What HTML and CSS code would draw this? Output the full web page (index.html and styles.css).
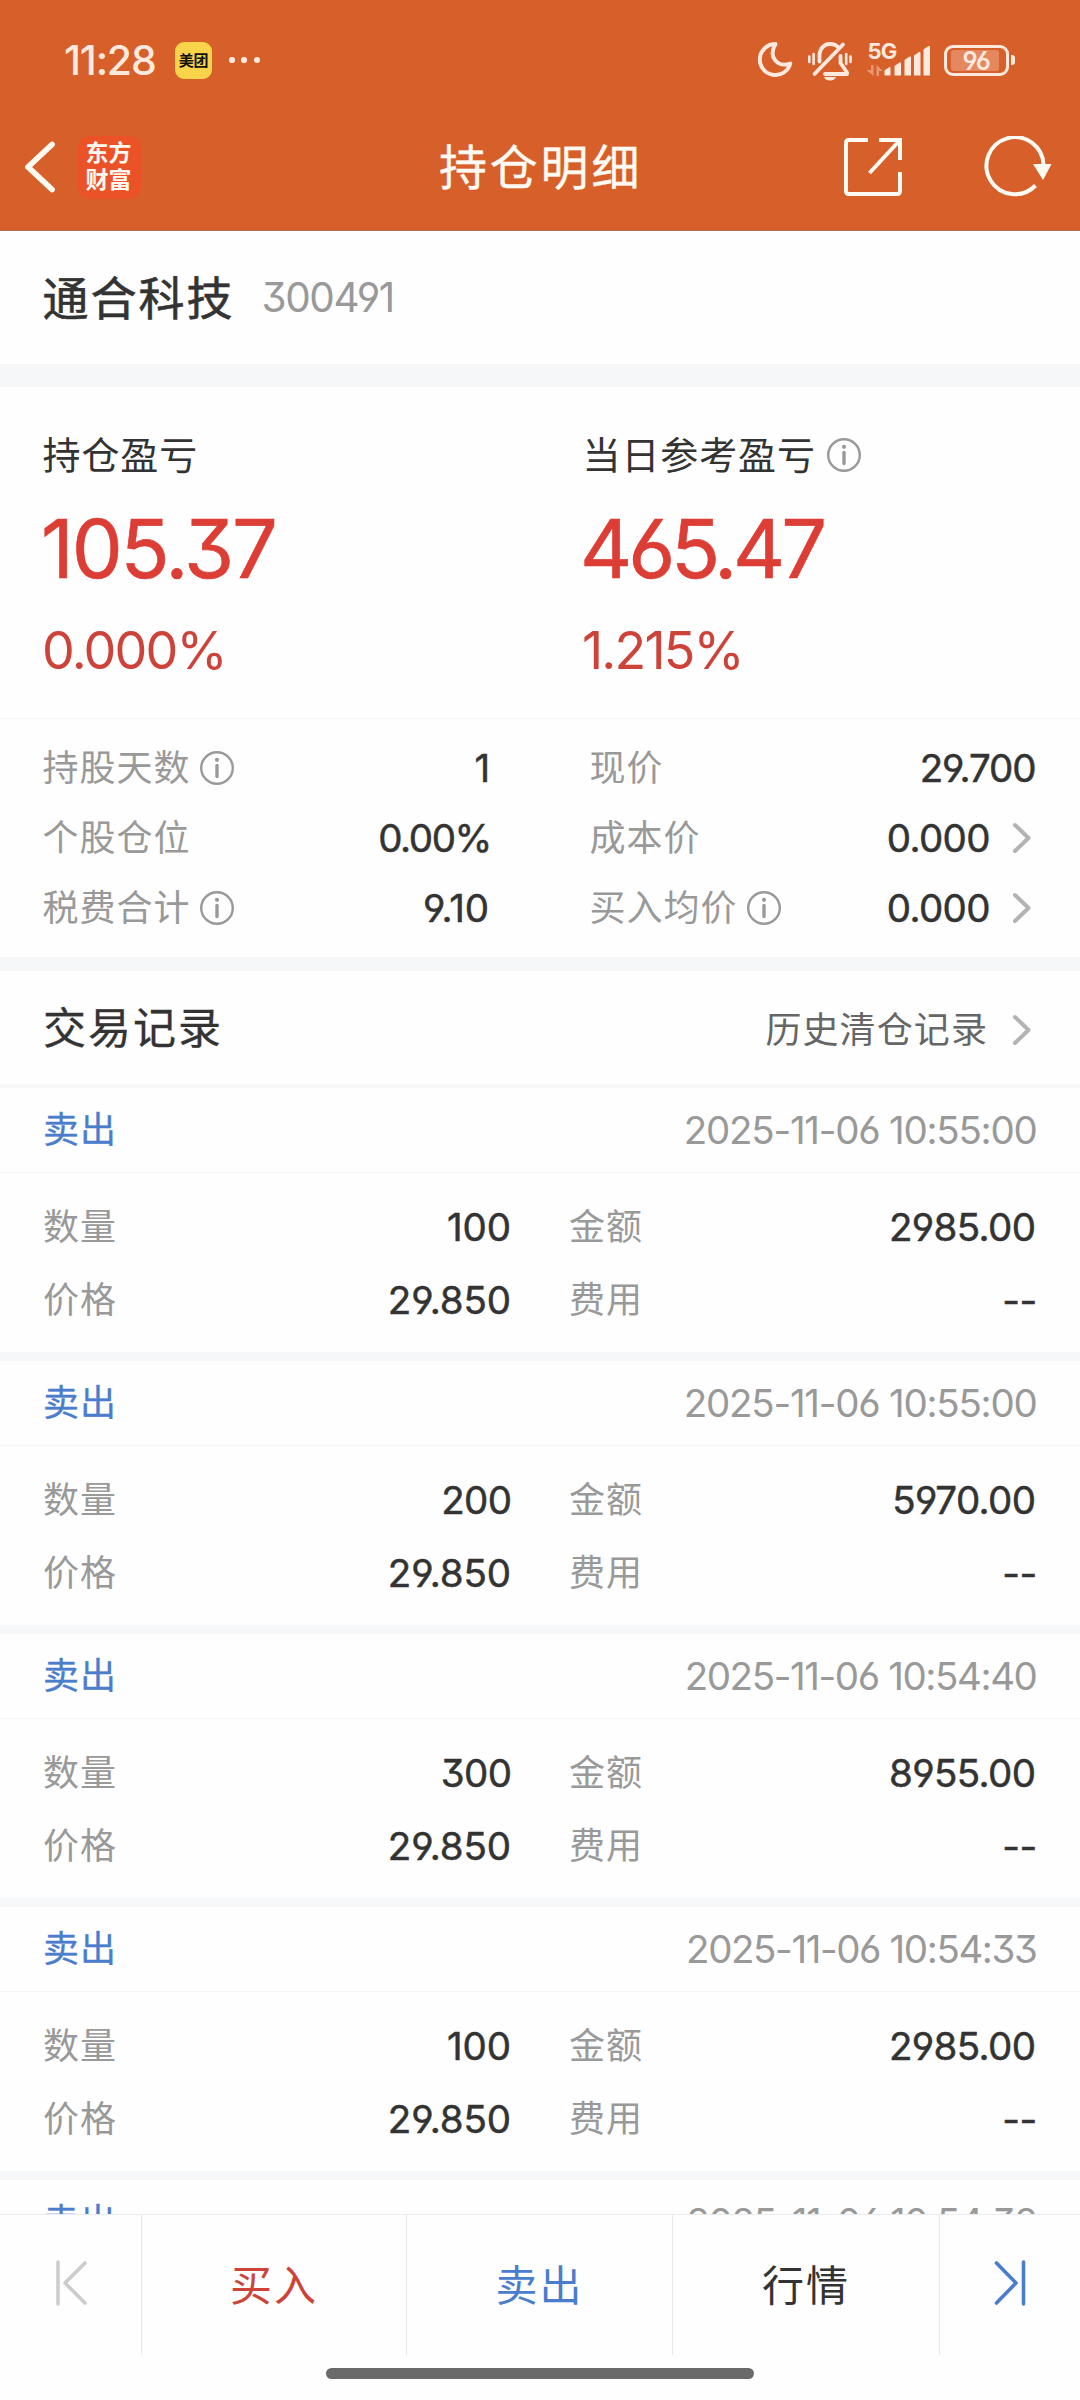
FILE: index.html
```html
<!DOCTYPE html>
<html lang="zh-CN">
<head>
<meta charset="utf-8">
<title>持仓明细</title>
<link rel="stylesheet" href="styles.css">
</head>
<body>
<svg class="defs" width="0" height="0">
  <symbol id="info" viewBox="0 0 36 36">
    <circle cx="18" cy="18" r="15.8" fill="none" stroke="currentColor" stroke-width="2.4"/>
    <circle cx="18" cy="9.8" r="2.1" fill="currentColor"/>
    <path d="M18 15.5v11" stroke="currentColor" stroke-width="3.4" stroke-linecap="round"/>
  </symbol>
  <symbol id="more" viewBox="0 0 20 34">
    <path d="M3 4l13.5 13L3 30" fill="none" stroke="currentColor" stroke-width="4" stroke-linecap="round" stroke-linejoin="round"/>
  </symbol>
</svg>
<div class="screen">
  <header class="top">
    <div class="status">
      <span class="clock">11:28</span>
      <span class="app-badge">美团</span>
      <svg class="dots" width="32" height="8" viewBox="0 0 32 8"><circle cx="4" cy="4" r="3.1"/><circle cx="16" cy="4" r="3.1"/><circle cx="29" cy="4" r="3.1"/></svg>
      <div class="status-right">
        <svg width="40" height="40" viewBox="0 0 40 40"><path d="M19.500 4A15.500 15.500 0 1 0 34.300 23.500C22 28 11.500 17.500 19.500 4z" fill="none" stroke="currentColor" stroke-width="3.900" stroke-linejoin="round"/></svg>
        <svg class="bell" width="48" height="42" viewBox="0 0 48 42" fill="none" stroke="currentColor" stroke-width="3.800" stroke-linecap="round">
          <path d="M8.500 35L37 5.500M13.500 22.500V15.500C14 9 18.500 5 24 5C28 5 31 6.500 32.700 9"/>
          <path d="M34.500 17V24L41 33.500V35H19" stroke-linejoin="round"/>
          <path d="M3.300 17.500v5.500M7.600 15v10M40.200 15v10M44.500 17.500v5.500" stroke-width="2.600"/>
          <path d="M18 38h12c-1 2.500-3 3.500-6 3.500s-5-1-6-3.500z" fill="currentColor" stroke="none"/>
        </svg>
        <div class="signal">
          <span class="net">5G</span>
          <svg width="66" height="38" viewBox="0 0 66 38" fill="currentColor">
            <path d="M18.500 29.500l5-3.500q1-.3 1 1v7.500h-6zM28.500 25l5-3.500q1.500-.5 1.500 1v12h-6.500zM38.500 19l5-3.500q1.500-.5 1.500 1v18h-6.500zM48 14.500l5-3.500q1.500-.5 1.500 1v22.500H48zM57.500 8.500l5-3.500q1.500-.5 1.500 1v28.500h-6.500z"/>
            <path d="M5 24h2.500v11l-7-6H5zM10.500 35V24l6.500 6h-4v5z" opacity=".4"/>
          </svg>
        </div>
        <div class="battery"><span class="charge">96</span></div><i class="nub"></i>
      </div>
    </div>
    <nav class="navbar">
      <svg class="back" width="36" height="54" viewBox="0 0 36 54"><path d="M31 4.500L7 27l24 22.500" fill="none" stroke="currentColor" stroke-width="5.800" stroke-linecap="round" stroke-linejoin="round"/></svg>
      <div class="logo"><span>东方</span><span>财富</span></div>
      <h1>持仓明细</h1>
      <svg class="share" width="60" height="60" viewBox="0 0 60 60" fill="none" stroke="currentColor" stroke-width="4"><path d="M25 3H6Q3 3 3 6v48q0 3 3 3h48q3 0 3-3V35M36 3h21v20M57 3L26.500 36"/></svg>
      <svg class="refresh" width="70" height="62" viewBox="0 0 70 62"><path d="M52.500 49.500A28.500 28.500 0 1 1 60.500 29" fill="none" stroke="currentColor" stroke-width="4"/><path d="M50 28h18.500L60 44z" fill="currentColor"/></svg>
    </nav>
  </header>

  <section class="stock"><h2>通合科技</h2><span class="code">300491</span></section>

  <section class="profit">
    <div class="profit-col">
      <div class="p-label">持仓盈亏</div>
      <div class="p-big">105.37</div>
      <div class="p-pct">0.000%</div>
    </div>
    <div class="profit-col">
      <div class="p-label">当日参考盈亏<svg class="info"><use href="#info"/></svg></div>
      <div class="p-big narrow">465.47</div>
      <div class="p-pct">1.215%</div>
    </div>
  </section>

  <section class="detail">
    <div class="d-col">
      <div class="row"><span class="label">持股天数</span><svg class="info"><use href="#info"/></svg><b>1</b></div>
      <div class="row"><span class="label">个股仓位</span><b class="tight">0.00%</b></div>
      <div class="row"><span class="label">税费合计</span><svg class="info"><use href="#info"/></svg><b class="loose">9.10</b></div>
    </div>
    <div class="d-col">
      <div class="row"><span class="label">现价</span><b class="snug">29.700</b></div>
      <div class="row"><span class="label">成本价</span><b>0.000</b><svg class="more"><use href="#more"/></svg></div>
      <div class="row"><span class="label">买入均价</span><svg class="info"><use href="#info"/></svg><b>0.000</b><svg class="more"><use href="#more"/></svg></div>
    </div>
  </section>

  <section class="log-head"><h3>交易记录</h3><a class="history">历史清仓记录</a><svg class="more"><use href="#more"/></svg></section>

  <main class="log">
    <article class="record">
      <div class="r-head"><span class="side">卖出</span><time>2025-11-06 10:55:00</time></div>
      <div class="r-body">
        <div class="row"><span class="label">数量</span><b class="loose">100</b></div><div class="row"><span class="label">金额</span><b>2985.00</b></div>
        <div class="row"><span class="label">价格</span><b class="loose">29.850</b></div><div class="row"><span class="label">费用</span><b class="none">--</b></div>
      </div>
    </article>
    <article class="record">
      <div class="r-head"><span class="side">卖出</span><time>2025-11-06 10:55:00</time></div>
      <div class="r-body">
        <div class="row"><span class="label">数量</span><b>200</b></div><div class="row"><span class="label">金额</span><b>5970.00</b></div>
        <div class="row"><span class="label">价格</span><b class="loose">29.850</b></div><div class="row"><span class="label">费用</span><b class="none">--</b></div>
      </div>
    </article>
    <article class="record">
      <div class="r-head"><span class="side">卖出</span><time class="snug">2025-11-06 10:54:40</time></div>
      <div class="r-body">
        <div class="row"><span class="label">数量</span><b>300</b></div><div class="row"><span class="label">金额</span><b>8955.00</b></div>
        <div class="row"><span class="label">价格</span><b class="loose">29.850</b></div><div class="row"><span class="label">费用</span><b class="none">--</b></div>
      </div>
    </article>
    <article class="record">
      <div class="r-head"><span class="side">卖出</span><time class="snug">2025-11-06 10:54:33</time></div>
      <div class="r-body">
        <div class="row"><span class="label">数量</span><b class="loose">100</b></div><div class="row"><span class="label">金额</span><b>2985.00</b></div>
        <div class="row"><span class="label">价格</span><b class="loose">29.850</b></div><div class="row"><span class="label">费用</span><b class="none">--</b></div>
      </div>
    </article>
    <article class="record">
      <div class="r-head"><span class="side">卖出</span><time class="snug">2025-11-06 10:54:32</time></div>
    </article>
  </main>

  <footer class="actions">
    <div class="buttons">
      <div class="btn first"><svg width="36" height="48" viewBox="0 0 36 48"><path d="M5 3v42M32 4L12 24l20 20" /></svg></div>
      <div class="btn buy">买入</div>
      <div class="btn sell">卖出</div>
      <div class="btn">行情</div>
      <div class="btn last"><svg width="36" height="48" viewBox="0 0 36 48"><path d="M31.500 3v42M4.500 4l19.500 20L4.500 44"/></svg></div>
    </div>
    <div class="home-bar"></div>
  </footer>
</div>
</body>
</html>
```
FILE: styles.css
```css
* { box-sizing: border-box; margin: 0; padding: 0; }
body {
  width: 1080px;
  background: #fefefe;
  color: #333;
  font-family: Inter, "Noto Sans CJK SC", sans-serif;
  font-feature-settings: "cv03", "cv04", "cv09";
}
.defs { display: block; position: absolute; }
.screen { display: flex; flex-direction: column; width: 1080px; height: 2400px; overflow: hidden; }
svg { display: block; flex: none; }

/* status bar and title bar */
.top { flex: none; height: 231px; background: #d75f29; border-bottom: 1px solid #b07050; color: #fffaf2; }
.status { display: flex; align-items: center; height: 120px; padding-left: 64px; color: #ffe9de; }
.clock { width: 111px; font-size: 41px; font-weight: 500; line-height: 50px; letter-spacing: -1.2px; }
.app-badge {
  width: 37px; height: 37px; border-radius: 9px; background: #f9d34a; color: #111;
  font-size: 15px; font-weight: 700; line-height: 37px; text-align: center; letter-spacing: -0.2px;
}
.dots { margin-left: 16px; fill: currentColor; }
.status-right { display: flex; align-items: center; margin-left: auto; padding-right: 65px; }
.bell { margin-left: 10px; }
.signal { display: grid; margin-left: 12px; }
.signal > * { grid-area: 1 / 1; }
.net { padding-left: 1.5px; font-size: 22px; font-weight: 700; line-height: 20px; letter-spacing: -0.8px; }
.battery {
  width: 65px; height: 31px; margin-left: 12px; padding: 2px 4px; border: 3.3px solid currentColor; border-radius: 9px;
}
.charge {
  display: block; width: 48px; height: 21px; border-radius: 3px; background: #e5875f;
  font-size: 25px; font-weight: 600; line-height: 22px; text-align: center; letter-spacing: -1.5px; padding-left: 2px;
}
.nub { width: 4px; height: 10px; margin-left: 2px; border-radius: 0 3px 3px 0; background: currentColor; }
.navbar { display: flex; align-items: center; height: 94px; padding-left: 21px; }
.logo {
  display: flex; flex-direction: column; align-items: center; justify-content: center;
  width: 63px; height: 63px; margin-left: 21px; padding-right: 2px; border-radius: 12px; background: #ec5228;
  font-size: 23px; font-weight: 700; line-height: 27px;
}
h1 { margin-left: 298px; padding-top: 2px; width: 206px; font-size: 48px; font-weight: 400; line-height: 60px; letter-spacing: 2.8px; white-space: nowrap; -webkit-text-stroke: 0.4px currentColor; }
.share { margin-left: 198px; }
.refresh { margin-left: 80px; }

/* stock name */
.stock { flex: none; display: flex; align-items: center; height: 133px; padding-left: 42.5px; }
h2 { font-size: 46px; font-weight: 400; line-height: 60px; letter-spacing: 2px; -webkit-text-stroke: 0.6px currentColor; }
.code { margin: 1px 0 0 27px; color: #999; font-size: 40.5px; line-height: 60px; letter-spacing: -1.4px; }

/* profit summary */
.profit {
  flex: none; display: flex; height: 355px; padding: 37px 0 0 42.5px;
  border-top: 23px solid #f6f7f9; border-bottom: 1px solid #f4f5f6;
}
.profit-col { flex: none; width: 540px; }
.p-label { display: flex; align-items: center; height: 60px; padding-top: 1px; font-size: 38px; letter-spacing: 0.9px; line-height: 60px; }
.info { width: 36px; height: 36px; margin-left: 10px; color: #999; }
.p-big {
  height: 129px; margin-left: -1.5px; padding-top: 1px; color: #dc3d35; font-size: 81px; font-weight: 400; line-height: 129px;
  letter-spacing: -2.3px; -webkit-text-stroke: 0.6px currentColor;
}
.p-big.narrow { margin-left: -2.5px; letter-spacing: -4.2px; }
.p-pct { height: 76px; margin-left: -0.5px; color: #cd4239; font-size: 52px; line-height: 76px; letter-spacing: -1.8px; }

/* position detail */
.detail { flex: none; display: flex; height: 252px; padding-top: 14px; border-bottom: 14px solid #f6f7f9; }
.d-col { width: 491px; padding-left: 42.5px; }
.d-col + .d-col { width: 589px; padding: 0 43px 0 98.5px; }
.row { display: flex; align-items: center; height: 70px; }
.label { color: #999; font-size: 36px; line-height: 50px; letter-spacing: 1px; }
.row .info { margin-left: 8.5px; }
b {
  margin: 0 1.5px 0 auto; font-size: 38.5px; font-weight: 400; line-height: 50px;
  letter-spacing: -0.6px; -webkit-text-stroke: 0.5px currentColor;
}
.tight { margin-right: 0; letter-spacing: -1.4px; }
.snug { letter-spacing: -1.1px; }
.loose { margin-right: 2px; letter-spacing: -0.1px; }
.none { margin-right: 0; letter-spacing: -0.3px; }
.more { width: 20px; height: 34px; margin: 0 5px 0 20.5px; color: #b3b3b3; }

/* trade log */
.log-head { flex: none; display: flex; align-items: center; height: 117px; padding: 0 43px; border-bottom: 4px solid #f7f8f9; }
h3 { font-size: 43px; font-weight: 400; line-height: 60px; letter-spacing: 2px; -webkit-text-stroke: 0.3px currentColor; }
.history { margin: 4px 3.5px 0 auto; color: #666; font-size: 36px; line-height: 50px; letter-spacing: 1.1px; }
.log-head .more { margin-top: 4px; }
.log { flex: 1; min-height: 0; overflow: hidden; }
.record { border-bottom: 9px solid #f6f7f9; }
.r-head { display: flex; align-items: center; justify-content: space-between; height: 85px; padding: 0 43px; border-bottom: 1px solid #f6f6f7; }
.side { color: #4b7dcd; font-size: 36px; font-weight: 400; line-height: 50px; letter-spacing: 1px; -webkit-text-stroke: 0.3px currentColor; }
time { margin-right: 0.5px; color: #999; font-size: 38.5px; line-height: 50px; letter-spacing: -1.25px; }
time.snug { letter-spacing: -1.4px; }
.r-body { display: grid; grid-template-columns: 470px 468px; align-content: start; column-gap: 56px; height: 179px; padding: 17px 43px 0; }
.r-body .row { height: 73px; }

/* bottom bar */
.actions { flex: none; height: 186px; border-top: 1px solid #e9ebec; }
.buttons { display: grid; grid-template-columns: 142px 265px 266px 267px 140px; height: 140px; }
.btn { display: flex; align-items: center; justify-content: center; padding-bottom: 6px; border-right: 1px solid #e9e9e9; font-size: 42px; letter-spacing: 2px; }
.first, .last { padding-bottom: 4px; }
.btn:last-child { border: 0; }
.btn path { fill: none; stroke: currentColor; stroke-width: 3.6; stroke-linecap: round; stroke-linejoin: round; }
.first { color: #ccc; }
.buy { color: #cd4239; }
.sell, .last { color: #4b7dcd; }
.home-bar { width: 428px; height: 11px; margin: 13px auto 0; border-radius: 5.5px; background: #6a6a6a; }
```
